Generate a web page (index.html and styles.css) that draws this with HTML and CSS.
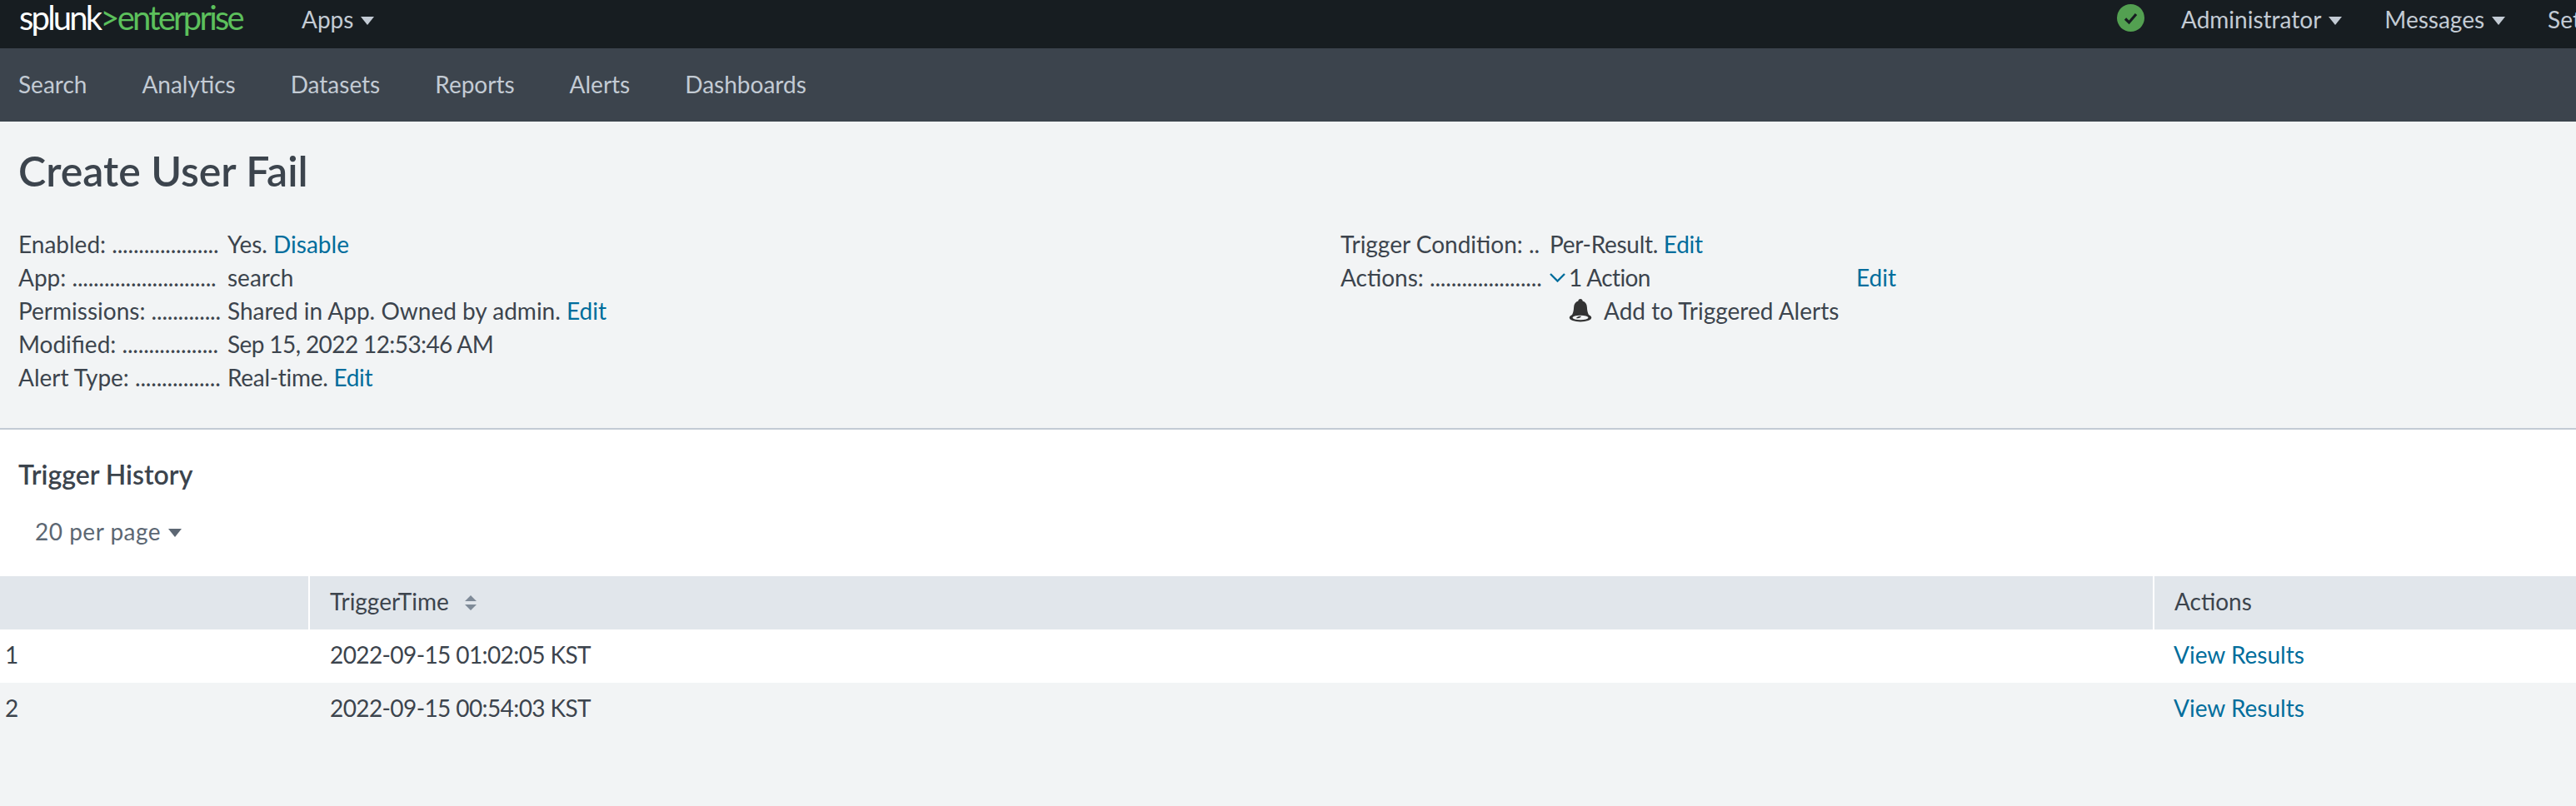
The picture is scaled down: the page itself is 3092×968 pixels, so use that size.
FILE: index.html
```html
<!DOCTYPE html>
<html lang="en">
<head>
    <meta charset="UTF-8">
    <title>Create User Fail</title>
    <link rel="stylesheet" href="styles.css">
</head>
<body>
    <header class="topbar">
        <div class="topbar-left">
            <a class="logo" href="#"><span class="logo-splunk">splunk</span><span class="logo-gt">&gt;</span><span class="logo-product">enterprise</span></a>
            <a class="top-link" href="#">Apps<i class="caret"></i></a>
        </div>
        <div class="topbar-right">
            <svg class="status-icon" viewBox="0 0 33 33">
                <circle cx="16.5" cy="16.5" r="16.5" fill="#53a051"/>
                <path d="M10 17.5l4.5 4.5 8.5-10" fill="none" stroke="#171d21" stroke-width="3.2"/>
            </svg>
            <a class="top-link" href="#">Administrator<i class="caret"></i></a>
            <a class="top-link" href="#">Messages<i class="caret"></i></a>
            <a class="top-link" href="#">Settings<i class="caret"></i></a>
        </div>
    </header>

    <nav class="appbar">
        <a href="#">Search</a>
        <a href="#">Analytics</a>
        <a href="#">Datasets</a>
        <a href="#">Reports</a>
        <a href="#">Alerts</a>
        <a href="#">Dashboards</a>
    </nav>

    <section class="summary">
        <h1 class="title">Create User Fail</h1>
        <div class="summary-cols">
            <div class="summary-col">
                <div class="row"><span class="label">Enabled: <span class="dots">....................</span></span><span class="value">Yes. <a href="#">Disable</a></span></div>
                <div class="row"><span class="label">App: <span class="dots">...........................</span></span><span class="value">search</span></div>
                <div class="row"><span class="label">Permissions: <span class="dots">.............</span></span><span class="value">Shared in App. Owned by admin. <a href="#">Edit</a></span></div>
                <div class="row"><span class="label">Modified: <span class="dots">..................</span></span><span class="value tight">Sep 15, 2022 12:53:46 AM</span></div>
                <div class="row"><span class="label">Alert Type: <span class="dots">................</span></span><span class="value tight-sm">Real-time. <a href="#">Edit</a></span></div>
            </div>
            <div class="summary-col">
                <div class="row"><span class="label">Trigger Condition: <span class="dots">..</span></span><span class="value tight-sm">Per-Result. <a href="#">Edit</a></span></div>
                <div class="row">
                    <span class="label">Actions: <span class="dots">.....................</span></span>
                    <span class="value action-head">
                        <svg class="chevron" viewBox="0 0 19 11"><path d="M1 1l8.5 8.5L18 1" fill="none" stroke="#006d9c" stroke-width="2.4"/></svg>
                        <span class="action-count tight">1 Action</span>
                        <a href="#">Edit</a>
                    </span>
                </div>
                <div class="row">
                    <span class="action-item">
                        <svg class="bell" viewBox="0 0 28 28">
                            <path d="M14 0c1.6 0 2.6 1 2.6 2.6 3.4 1 5.1 3.6 5.3 7.4.2 4.4 1 8 3.1 10.4H3C5.1 18 5.900 14.400 6.100 10c.2-3.800 1.900-6.400 5.300-7.400C11.400 1 12.400 0 14 0z" fill="#333"/>
                            <ellipse cx="14" cy="22.500" rx="13.200" ry="5" fill="#333"/>
                            <ellipse cx="14" cy="22.500" rx="9.500" ry="2.800" fill="#f2f4f5"/>
                            <path d="M9 23c1-2 4-2.500 6-2.300-.5 1.800-3.500 3-6 2.300z" fill="#333"/>
                        </svg>
                        Add to Triggered Alerts
                    </span>
                </div>
            </div>
        </div>
    </section>

    <section class="history">
        <h2 class="history-title">Trigger History</h2>
        <div class="per-page">20 per page<i class="caret caret-dark"></i></div>
    </section>

    <div class="results">
        <div class="results-row results-head">
            <div class="cell cell-index"></div>
            <div class="cell">TriggerTime
                <svg class="sort" viewBox="0 0 14 18"><path d="M7 0l7 7H0zM7 18L0 11h14z" fill="#7f8b98"/></svg>
            </div>
            <div class="cell">Actions</div>
        </div>
        <div class="results-row">
            <div class="cell cell-index">1</div>
            <div class="cell tight">2022-09-15 01:02:05 KST</div>
            <div class="cell"><a href="#">View Results</a></div>
        </div>
        <div class="results-row results-alt">
            <div class="cell cell-index">2</div>
            <div class="cell tight">2022-09-15 00:54:03 KST</div>
            <div class="cell"><a href="#">View Results</a></div>
        </div>
    </div>
</body>
</html>
```

FILE: styles.css
```css
html, body {
    margin: 0;
    padding: 0;
}
body {
    min-height: 968px;
    overflow: hidden;
    background-color: #f2f4f5;
    color: #3c444d;
    font-family: Lato, "Open Sans", sans-serif;
    font-size: 28px;
}
a {
    color: #006d9c;
    text-decoration: none;
}
.tight {
    letter-spacing: -0.6px;
}
.tight-sm {
    letter-spacing: -0.3px;
}

/* top bar */
.topbar {
    display: flex;
    height: 58px;
    background-color: #171d21;
    white-space: nowrap;
}
.topbar-left {
    flex: 0 0 2541px;
    display: flex;
    align-items: flex-start;
    padding-left: 23px;
    box-sizing: border-box;
}
.topbar-right {
    flex: none;
    display: flex;
    align-items: flex-start;
    gap: 44px;
}
.logo {
    width: 339px;
    font-size: 40px;
    letter-spacing: -2.8px;
    line-height: 42px;
}
.logo-splunk {
    color: #fff;
}
.logo-gt, .logo-product {
    color: #5cc05c;
}
.top-link {
    color: #c3cbd4;
    line-height: 46px;
}
.top-link + .top-link {
    margin-left: 7px;
}
.caret {
    display: inline-block;
    margin-left: 9px;
    vertical-align: 4px;
    border-top: 10px solid #c3cbd4;
    border-left: 8px solid transparent;
    border-right: 8px solid transparent;
}
.caret-dark {
    border-top-color: #5c6773;
}
.status-icon {
    width: 33px;
    height: 33px;
    margin-top: 5px;
}

/* app bar */
.appbar {
    display: flex;
    gap: 66px;
    align-items: center;
    height: 85px;
    padding: 0 0 3px 22px;
    background-color: #3c444d;
}
.appbar a {
    color: #c3cbd4;
}

/* summary */
.summary {
    padding: 31px 0 0 22px;
    box-sizing: border-box;
    height: 370px;
    border-bottom: 2px solid #c3cbd4;
}
.title {
    margin: 0 0 40px;
    font-size: 50px;
    font-weight: 600;
    line-height: 56px;
}
.summary-cols {
    display: flex;
}
.summary-col {
    flex: none;
    width: 1587px;
}
.row {
    display: flex;
    height: 40px;
    line-height: 40px;
}
.label {
    flex: none;
    width: 240px;
    margin-right: 11px;
    white-space: nowrap;
}
.dots {
    letter-spacing: -0.2px;
}
.action-head {
    display: flex;
    align-items: center;
}
.chevron {
    width: 19px;
    height: 11px;
    margin-right: 4px;
}
.action-count {
    width: 345px;
}
.action-item {
    display: flex;
    align-items: center;
    margin-left: 274px;
}
.bell {
    width: 28px;
    height: 28px;
    margin-right: 14px;
}

/* trigger history */
.history {
    height: 176px;
    padding-left: 22px;
    box-sizing: border-box;
    background-color: #fff;
}
.history-title {
    margin: 0;
    padding-top: 34px;
    font-size: 32px;
    font-weight: 600;
    line-height: 40px;
}
.per-page {
    padding: 28px 0 0 20px;
    line-height: 40px;
    letter-spacing: 0.5px;
    color: #5c6773;
}

/* table */
.results-row {
    display: grid;
    grid-template-columns: 370px 1fr 508px;
    height: 64px;
    line-height: 61px;
    background-color: #fff;
}
.results-head {
    background-color: #e1e6eb;
}
.results-alt {
    background-color: #f2f4f5;
}
.cell {
    padding-left: 26px;
    white-space: nowrap;
}
.cell:last-child {
    padding-left: 25px;
}
.cell-index {
    padding-left: 6px;
}
.results-head .cell + .cell {
    border-left: 2px solid #fff;
    padding-left: 24px;
}
.sort {
    width: 14px;
    height: 18px;
    margin-left: 12px;
}
```
